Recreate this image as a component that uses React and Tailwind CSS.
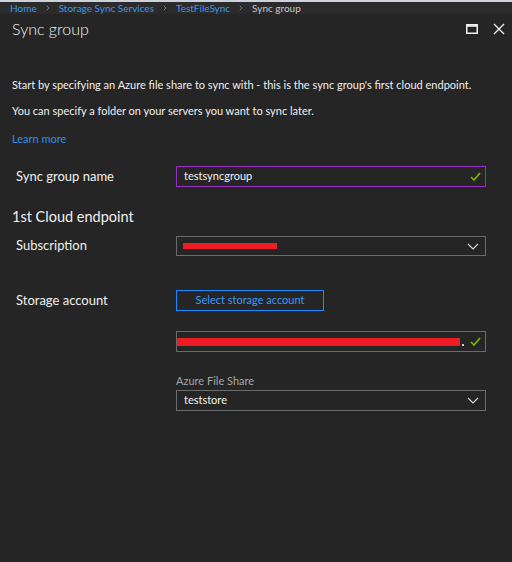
import { ChevronRight } from 'lucide-react';

const font = { fontFamily: '"Segoe UI", Lato, "Noto Sans", sans-serif' };

function Check() {
  return (
    <svg width="11" height="9" viewBox="0 0 11 9" className="shrink-0">
      <path d="M1 5 L4 8 L10 1" fill="none" stroke="#7fba00" strokeWidth="1.6" />
    </svg>
  );
}

function Chevron() {
  return (
    <svg width="12" height="7" viewBox="0 0 12 7" className="shrink-0">
      <path d="M1 1 L6 6 L11 1" fill="none" stroke="#d8d8d8" strokeWidth="1.2" />
    </svg>
  );
}

function FieldRow({ label, children, className = '' }) {
  return (
    <div className={`flex items-center ${className}`}>
      <div className="w-[176px] pl-[16px] text-[13px] text-[#f0f0f0]">{label}</div>
      <div className="w-[310px]">{children}</div>
    </div>
  );
}

export default function App() {
  return (
    <div className="w-[512px] h-[562px] bg-[#252525] flex flex-col overflow-hidden" style={font}>
      <div className="h-[2px] bg-[#cdd1dc]" />
      <div className="h-[12px] bg-[#2b2b2b] flex items-center pl-[10px] gap-[7px] text-[10px] leading-none">
        <span className="text-[#3a96f0]">Home</span>
        <ChevronRight size={8} className="text-[#9a9a9a]" />
        <span className="text-[#3a96f0]">Storage Sync Services</span>
        <ChevronRight size={8} className="text-[#9a9a9a]" />
        <span className="text-[#3a96f0]">TestFileSync</span>
        <ChevronRight size={8} className="text-[#9a9a9a]" />
        <span className="text-[#c8c8c8]">Sync group</span>
      </div>
      <div className="h-[30px] flex items-center justify-between pl-[12px] pr-[7px]">
        <h1 className="text-[16px] font-light text-[#f2f2f2]">Sync group</h1>
        <div className="flex items-center gap-[15px]">
          <svg width="12" height="10" viewBox="0 0 12 10">
            <rect x="0.75" y="0.75" width="10.5" height="8.5" fill="none" stroke="#f0f0f0" strokeWidth="1.5" />
            <rect x="0.75" y="0.75" width="10.5" height="2" fill="#f0f0f0" />
          </svg>
          <svg width="12" height="12" viewBox="0 0 12 12">
            <path d="M1 1 L11 11 M11 1 L1 11" stroke="#f0f0f0" strokeWidth="1.4" />
          </svg>
        </div>
      </div>

      <div className="pl-[12px] mt-[34px] text-[11px] leading-[14px] text-[#f0f0f0]">
        <p>Start by specifying an Azure file share to sync with - this is the sync group's first cloud endpoint.</p>
        <p className="mt-[12px]">You can specify a folder on your servers you want to sync later.</p>
        <p className="mt-[14px] text-[#2f8fe8]">Learn more</p>
      </div>

      <FieldRow label="Sync group name" className="mt-[20px]">
        <div className="h-[21px] border border-[#9a2fc4] flex items-center justify-between pl-[7px] pr-[4px] text-[11px] text-[#f2f2f2]">
          <span>testsyncgroup</span>
          <Check />
        </div>
      </FieldRow>

      <div className="pl-[12px] mt-[21px] text-[14.5px] text-[#f2f2f2] leading-[18px]">1st Cloud endpoint</div>

      <FieldRow label="Subscription" className="mt-[10px]">
        <div className="h-[20px] border border-[#6b6b6b] flex items-center justify-between pl-[6px] pr-[6px]">
          <div className="w-[94px] h-[6px] bg-[#ee1c25]" />
          <Chevron />
        </div>
      </FieldRow>

      <div className="flex items-center mt-[34px]">
        <div className="w-[176px] pl-[16px] text-[13px] text-[#f0f0f0]">Storage account</div>
        <button className="w-[148px] h-[21px] border border-[#1a8cff] text-[11px] text-[#3a9bff]">
          Select storage account
        </button>
      </div>

      <div className="ml-[176px] mt-[20px] w-[310px] h-[21px] border border-[#6b6b6b] flex items-center justify-between pr-[4px]">
        <div className="flex items-end">
          <div className="w-[283px] h-[8px] bg-[#ee1c25]" />
          <span className="ml-[2px] w-[2px] h-[2px] bg-[#d0d0d0]" />
        </div>
        <Check />
      </div>

      <div className="ml-[176px] mt-[22px] text-[11px] leading-[14px] text-[#a6a6a6]">Azure File Share</div>
      <div className="ml-[176px] mt-[2px] w-[310px] h-[21px] border border-[#6b6b6b] flex items-center justify-between pl-[7px] pr-[6px] text-[11px] text-[#f2f2f2]">
        <span>teststore</span>
        <Chevron />
      </div>
    </div>
  );
}
